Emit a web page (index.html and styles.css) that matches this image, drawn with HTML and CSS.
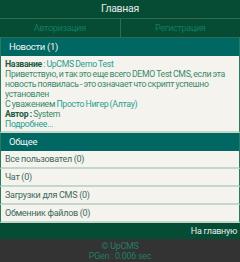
FILE: index.html
```html
<!DOCTYPE html>
<html lang="ru">
<head>
    <meta charset="utf-8">
    <title>Главная</title>
    <link rel="stylesheet" href="styles.css">
</head>
<body>
<div class="head">Главная</div>
<div class="nav">
    <a href="#">Авторизация</a>
    <a href="#">Регистрация</a>
</div>
<div class="title">Новости (1)</div>
<div class="post">
    <div><b>Название</b> <span class="hl">: UpCMS Demo Test</span></div>
    <div>Приветствую, и так это еще всего DEMO Test CMS, если эта новость появилась - это означает что скрипт успешно установлен</div>
    <div>С уважением <a href="#">Просто Нигер (Алтау)</a></div>
    <div><b>Автор :</b> System</div>
    <div><a href="#" class="more">Подробнее...</a></div>
</div>
<div class="title">Общее</div>
<div class="menu">
    <a href="#">Все пользовател (0)</a>
    <a href="#">Чат (0)</a>
    <a href="#">Загрузки для CMS (0)</a>
    <a href="#">Обменник файлов (0)</a>
</div>
<div class="home"><a href="#">На главную</a></div>
<div class="foot">
    <div>© UpCMS</div>
    <div>PGen : 0.006 sec</div>
</div>
</body>
</html>
```
FILE: styles.css
```css
* {
    margin: 0;
    padding: 0;
    box-sizing: border-box;
}
body {
    font-family: Roboto, "Liberation Sans", sans-serif;
    font-size: 9px;
    letter-spacing: -0.3px;
    background-color: #333333;
    color: #3a8a6a;
}
a {
    text-decoration: none;
    color: #27a08e;
}
.head {
    height: 19px;
    line-height: 18px;
    text-align: center;
    font-size: 10.5px;
    color: #e4ece8;
    background-color: #064b33;
    border-bottom: 1px solid #2e6c52;
}
.nav {
    display: flex;
    height: 19px;
    background-color: #064b33;
    border-bottom: 1px solid #2e6c52;
}
.nav a {
    flex: 1;
    line-height: 18px;
    text-align: center;
    color: #0f7d62;
}
.nav a:first-child {
    border-right: 1px solid #2e6c52;
}
.title {
    height: 18px;
    line-height: 18px;
    padding-left: 8px;
    font-size: 9.5px;
    color: #f2f6f4;
    background-color: #006762;
    border-left: 1px solid #2a7a60;
    border-right: 1px solid #2a7a60;
}
.post {
    font-size: 8.7px;
    word-spacing: -0.5px;
    background-color: #f4f3ee;
    border-left: 1px solid #2a7a60;
    border-right: 1px solid #2a7a60;
    border-bottom: 2px solid #c3d8cb;
    padding: 3px 4px 2px;
    line-height: 10px;
}
.post b {
    color: #1f5c43;
}
.post .hl {
    color: #27a08e;
}
.menu a {
    display: block;
    height: 18px;
    line-height: 17px;
    padding-left: 4px;
    color: #3f6a5c;
    background-color: #f4f3ee;
    border-left: 1px solid #2a7a60;
    border-right: 1px solid #2a7a60;
    border-bottom: 2px solid #c3d8cb;
}
.home {
    height: 16px;
    line-height: 16px;
    text-align: right;
    padding-right: 3px;
    background-color: #064b33;
}
.home a {
    color: #e4ece8;
}
.foot {
    text-align: center;
    color: #1d7f68;
    line-height: 10px;
    padding-top: 2px;
    height: 24px;
}
```
